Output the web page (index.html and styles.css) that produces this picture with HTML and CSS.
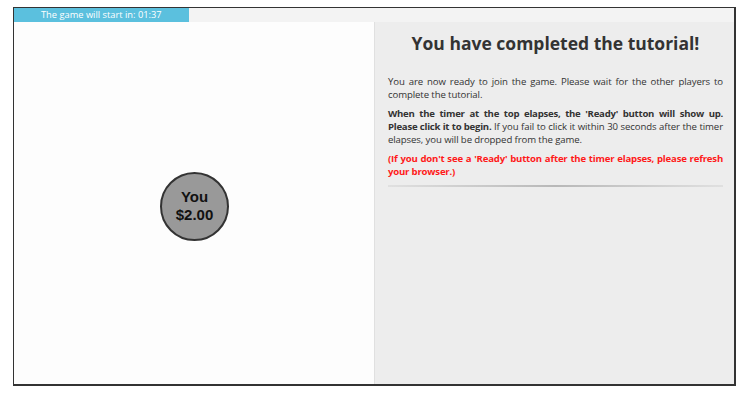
FILE: index.html
```html
<!DOCTYPE html>
<html>
<head>
<meta charset="utf-8">
<link rel="stylesheet" href="styles.css">
</head>
<body>
<div class="frame">
  <div class="topbar">
    <div class="timer">The game will start in: 01:37</div>
  </div>
  <div class="main">
    <div class="canvas">
      <div class="player">You<br>$2.00</div>
    </div>
    <div class="side">
      <h1 class="title">You have completed the tutorial!</h1>
      <p class="para">You are now ready to join the game. Please wait for the other players to complete the tutorial.</p>
      <p class="para"><b>When the timer at the top elapses, the 'Ready' button will show up. Please click it to begin.</b> If you fail to click it within 30 seconds after the timer elapses, you will be dropped from the game.</p>
      <p class="para warn">(If you don't see a 'Ready' button after the timer elapses, please refresh your browser.)</p>
      <div class="rule"></div>
    </div>
  </div>
</div>
</body>
</html>
```
FILE: styles.css
```css
html, body {
  margin: 0;
  padding: 0;
  background: #ffffff;
}
.frame {
  margin: 7px 0 0 13px;
  width: 720px;
  height: 376px;
  border-style: solid;
  border-color: #333;
  border-width: 1px 2px 2px 1px;
  display: flex;
  flex-direction: column;
  font-family: "Open Sans", sans-serif;
}
.topbar {
  height: 14px;
  background: #f3f3f3;
  display: flex;
}
.timer {
  width: 148px;
  padding-left: 27px;
  background: #5bc0de;
  color: #fff;
  font-size: 9.3px;
  line-height: 14px;
}
.main {
  flex: 1;
  display: flex;
}
.canvas {
  width: 360px;
  background: #fdfdfd;
  display: flex;
  align-items: center;
  justify-content: center;
}
.player {
  width: 65px;
  height: 65px;
  border-radius: 50%;
  background: #999;
  border: 2px solid #333;
  box-sizing: content-box;
  margin: 6px 0 0 1px;
  color: #111;
  font-family: "Liberation Sans", Arial, sans-serif;
  font-weight: bold;
  font-size: 15px;
  line-height: 18px;
  text-align: center;
  display: flex;
  align-items: center;
  justify-content: center;
}
.side {
  flex: 1;
  background: #ededed;
  border-left: 1px solid #e0e0e0;
  padding: 0 11px 0 13px;
}
.title {
  margin: 8px 0 0 0;
  text-align: center;
  font-size: 17.5px;
  font-weight: bold;
  color: #333;
  line-height: 26px;
}
.para {
  margin: 0 0 6px 0;
  font-size: 9.6px;
  line-height: 13px;
  color: #333;
  text-align: justify;
  letter-spacing: -0.1px;
}
.title + .para {
  margin-top: 19px;
}
.para b {
  color: #333;
  letter-spacing: -0.25px;
}
.warn {
  color: #ff1a1a;
  font-weight: bold;
  letter-spacing: -0.2px;
}
.rule {
  margin-top: 7px;
  height: 2px;
  background: linear-gradient(to right, #e0e0e0, #b8b8b8 50%, #e0e0e0);
}
```
